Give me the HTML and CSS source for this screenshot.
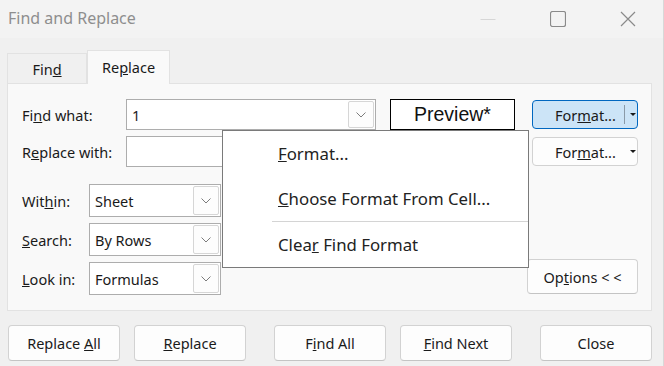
FILE: index.html
```html
<!DOCTYPE html>
<html lang="en">
<head>
    <meta charset="UTF-8">
    <meta name="viewport" content="width=device-width, initial-scale=1.0">
    <title>Find and Replace</title>
    <link rel="stylesheet" href="styles.css">
</head>
<body>

<div class="window">

    <div class="titlebar">
        <span class="title">Find and Replace</span>
        <div class="controls">
            <span class="ctrl">
                <svg width="16" height="16" viewBox="0 0 16 16"><line x1="0.5" y1="8.5" x2="15.5" y2="8.5" stroke="#d6d6d6" stroke-width="1"/></svg>
            </span>
            <span class="ctrl">
                <svg width="16" height="16" viewBox="0 0 16 16"><rect x="0.5" y="0.5" width="15" height="15" rx="2" fill="none" stroke="#8a8a8a" stroke-width="1.2"/></svg>
            </span>
            <span class="ctrl">
                <svg width="16" height="16" viewBox="0 0 16 16"><path d="M1 1 L15 15 M15 1 L1 15" stroke="#8a8a8a" stroke-width="1.2" fill="none"/></svg>
            </span>
        </div>
    </div>

    <div class="tabs">
        <div class="tab"><span>Fin<u>d</u></span></div>
        <div class="tab active"><span>Re<u>p</u>lace</span></div>
    </div>

    <div class="panel">
        <div class="row">
            <label class="label">Fi<u>n</u>d what:</label>
            <div class="combo wide">
                <span class="value">1</span>
                <span class="drop"><svg width="10" height="6" viewBox="0 0 10 6"><polyline points="0.5,0.5 5,5 9.5,0.5" fill="none" stroke="#7c7c7c" stroke-width="1"/></svg></span>
            </div>
            <div class="preview">Preview*</div>
            <button class="format split"><span>For<u>m</u>at...</span><span class="sep"></span><span class="arrow"></span></button>
        </div>
        <div class="row second">
            <label class="label">R<u>e</u>place with:</label>
            <div class="combo wide">
                <span class="value"></span>
                <span class="drop"><svg width="10" height="6" viewBox="0 0 10 6"><polyline points="0.5,0.5 5,5 9.5,0.5" fill="none" stroke="#7c7c7c" stroke-width="1"/></svg></span>
            </div>
            <div class="preview"></div>
            <button class="format"><span>For<u>m</u>at...</span><span class="arrow"></span></button>
        </div>

        <div class="options">
            <div class="selects">
                <div class="select-row">
                    <label class="label short">Wit<u>h</u>in:</label>
                    <div class="combo narrow">
                        <span class="value">Sheet</span>
                        <span class="drop"><svg width="10" height="6" viewBox="0 0 10 6"><polyline points="0.5,0.5 5,5 9.5,0.5" fill="none" stroke="#7c7c7c" stroke-width="1"/></svg></span>
                    </div>
                </div>
                <div class="select-row">
                    <label class="label short"><u>S</u>earch:</label>
                    <div class="combo narrow">
                        <span class="value">By Rows</span>
                        <span class="drop"><svg width="10" height="6" viewBox="0 0 10 6"><polyline points="0.5,0.5 5,5 9.5,0.5" fill="none" stroke="#7c7c7c" stroke-width="1"/></svg></span>
                    </div>
                </div>
                <div class="select-row">
                    <label class="label short"><u>L</u>ook in:</label>
                    <div class="combo narrow">
                        <span class="value">Formulas</span>
                        <span class="drop"><svg width="10" height="6" viewBox="0 0 10 6"><polyline points="0.5,0.5 5,5 9.5,0.5" fill="none" stroke="#7c7c7c" stroke-width="1"/></svg></span>
                    </div>
                </div>
            </div>
            <button class="btn options-btn">Op<u>t</u>ions &lt; &lt;</button>
        </div>
    </div>

    <div class="actions">
        <button class="btn">Replace <u>A</u>ll</button>
        <button class="btn"><u>R</u>eplace</button>
        <button class="btn spaced">F<u>i</u>nd All</button>
        <button class="btn"><u>F</u>ind Next</button>
        <button class="btn spaced">Close</button>
    </div>

    <!-- popup of the Format split button -->
    <div class="menu">
        <div class="menu-item"><span><u>F</u>ormat...</span></div>
        <div class="menu-item"><span><u>C</u>hoose Format From Cell...</span></div>
        <div class="menu-sep"></div>
        <div class="menu-item"><span>Clea<u>r</u> Find Format</span></div>
    </div>

</div>

</body>
</html>
```

FILE: styles.css
```css
body {
    margin: 0;
    font-family: "Noto Sans", sans-serif;
    background-color: #f0f0f0;
    color: #1a1a1a;
}

.window {
    position: relative;
    width: 663px;
    height: 366px;
    border-right: 1px solid #d8d8d8;
    background-color: #f0f0f0;
}

.titlebar {
    height: 38px;
    background-color: #f3f3f3;
    display: flex;
    align-items: center;
    justify-content: space-between;
}

.title {
    padding-left: 8px;
    font-size: 16px;
    color: #8e8e8e;
    margin-top: -3px;
}

.controls {
    display: flex;
}

.ctrl {
    width: 70px;
    height: 34px;
    display: flex;
    align-items: center;
    justify-content: center;
}

.tabs {
    display: flex;
    align-items: flex-end;
    height: 33px;
    margin-top: 12px;
    padding-left: 7px;
}

.tab {
    width: 80px;
    height: 30px;
    box-sizing: border-box;
    border: 1px solid #e2e2e2;
    border-bottom: none;
    display: flex;
    align-items: center;
    justify-content: center;
    font-size: 14.5px;
}

.tab.active {
    width: 83px;
    height: 34px;
    margin-bottom: -1px;
    background-color: #f9f9f9;
    position: relative;
    z-index: 1;
    padding-bottom: 2px;
}

.panel {
    margin-left: 7px;
    width: 645px;
    height: 228px;
    box-sizing: border-box;
    border: 1px solid #e2e2e2;
    background-color: #f9f9f9;
    padding: 15px 13px 0 14px;
}

.row {
    display: flex;
    align-items: center;
    height: 31px;
}

.row.second {
    margin-top: 6px;
}

.label {
    font-size: 14.5px;
    width: 104px;
    flex-shrink: 0;
}

.label.short {
    width: 67px;
}

.combo {
    display: flex;
    align-items: stretch;
    box-sizing: border-box;
    border: 1px solid #adadad;
    background-color: #ffffff;
    height: 100%;
}

.combo.wide {
    width: 250px;
}

.combo.narrow {
    width: 132px;
}

.combo .value {
    flex: 1;
    display: flex;
    align-items: center;
    padding-left: 5px;
    font-size: 14.5px;
}

.combo .drop {
    width: 26px;
    margin: 1px;
    box-sizing: border-box;
    border: 1px solid #d6d6d6;
    border-radius: 2px;
    background-color: #fdfdfd;
    display: flex;
    align-items: center;
    justify-content: center;
}

.preview {
    width: 125px;
    height: 31px;
    margin-left: 14px;
    box-sizing: border-box;
    border: 1px solid #000000;
    background-color: #ffffff;
    display: flex;
    align-items: center;
    justify-content: center;
    font-family: "Liberation Sans", Arial, sans-serif;
    font-size: 19.5px;
    color: #111111;
}

.format {
    margin-left: auto;
    width: 106px;
    height: 29px;
    box-sizing: border-box;
    border: 1px solid #d2d2d2;
    border-radius: 4px;
    background-color: #fdfdfd;
    font-family: inherit;
    font-size: 14.5px;
    color: #1a1a1a;
    display: flex;
    align-items: center;
    padding: 0 0 0 22px;
    position: relative;
}

.format.split {
    background-color: #cce4f7;
    border-color: #0067c0;
}

.format .sep {
    position: absolute;
    left: 91px;
    top: 4px;
    bottom: 4px;
    border-left: 1px solid #8a9aa8;
}

.format .arrow {
    position: absolute;
    left: 97px;
    top: 12px;
    border-left: 3px solid transparent;
    border-right: 3px solid transparent;
    border-top: 3px solid #1a1a1a;
}

.options {
    margin-top: 17px;
    display: flex;
    justify-content: space-between;
    align-items: flex-end;
}

.selects {
    display: flex;
    flex-direction: column;
    gap: 6px;
}

.select-row {
    display: flex;
    align-items: center;
    height: 33px;
}

.btn {
    width: 112px;
    height: 36px;
    box-sizing: border-box;
    border: 1px solid #d2d2d2;
    border-bottom-color: #c4c4c4;
    border-radius: 4px;
    background-color: #fdfdfd;
    font-family: inherit;
    font-size: 14.5px;
    color: #1a1a1a;
    padding: 0;
}

.options-btn {
    width: 111px;
    height: 35px;
    margin-bottom: 1px;
}

.actions {
    display: flex;
    gap: 14px;
    padding-left: 8px;
    margin-top: 14px;
}

.actions .spaced {
    margin-left: 14px;
}

.menu {
    position: absolute;
    left: 222px;
    top: 130px;
    width: 307px;
    height: 138px;
    box-sizing: border-box;
    border: 1px solid #7a7a7a;
    background-color: #ffffff;
    z-index: 5;
}

.menu-item {
    height: 45px;
    display: flex;
    align-items: center;
    padding-left: 55px;
    font-size: 16.8px;
    color: #222222;
}

.menu-sep {
    margin-left: 49px;
    border-top: 1px solid #d4d4d4;
}
```
